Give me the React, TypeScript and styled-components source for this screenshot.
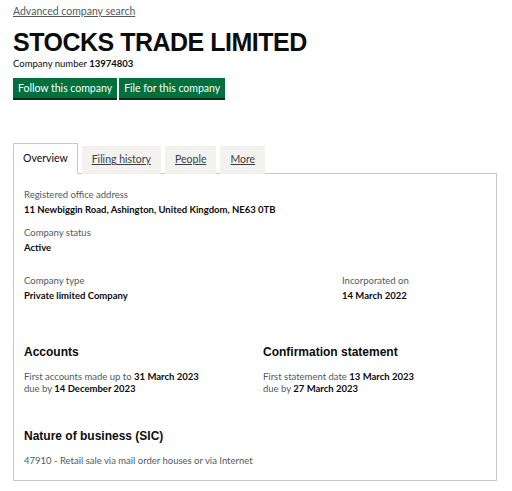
import { createGlobalStyle, styled } from "styled-components";

const GlobalStyle = createGlobalStyle`
  body {
    margin: 0;
    background: #ffffff;
    color: #0b0c0c;
    font-family: Lato, "Noto Sans", "Liberation Sans", Arial, sans-serif;
  }
`;

const Page = styled.div`
  padding: 4px 15px 10px 13px;
  display: flex;
  flex-direction: column;
`;

const BackLink = styled.a`
  font-size: 10.5px;
  color: #505a5f;
  text-decoration: underline;
  line-height: 14px;
  align-self: flex-start;
`;

const Title = styled.h1`
  margin: 12px 0 0;
  font-family: "Liberation Sans", Arial, sans-serif;
  font-size: 25px;
  font-weight: 700;
  line-height: 25px;
  letter-spacing: -0.5px;
`;

const CompanyNumber = styled.p`
  margin: 3px 0 0;
  font-size: 9.5px;
  line-height: 12px;
  color: #0b0c0c;

  strong {
    font-weight: 700;
  }
`;

const ButtonRow = styled.div`
  display: flex;
  gap: 2px;
  margin-top: 8px;
`;

const GreenButton = styled.button`
  background-color: #00703c;
  color: #ffffff;
  border: 0;
  box-shadow: 0 2px 0 #002d18;
  font-family: Lato, "Noto Sans", Arial, sans-serif;
  font-size: 10.5px;
  height: 20px;
  padding: 0 5px;
  cursor: pointer;
`;

const Tabs = styled.div`
  margin-top: 45px;
`;

const TabList = styled.div`
  display: flex;
  align-items: flex-end;
  gap: 4px;
  margin-bottom: -1px;
  position: relative;
`;

const Tab = styled.a<{ $active?: boolean }>`
  font-size: 10.5px;
  line-height: 14px;
  color: ${(p) => (p.$active ? "#0b0c0c" : "#383f43")};
  text-decoration: ${(p) => (p.$active ? "none" : "underline")};
  background: ${(p) => (p.$active ? "#ffffff" : "#f3f2f1")};
  border: 1px solid ${(p) => (p.$active ? "#c8c8c8" : "transparent")};
  border-bottom-color: ${(p) => (p.$active ? "#ffffff" : "transparent")};
  padding: ${(p) => (p.$active ? "7px 9px 8px" : "5px 9px 7px")};
`;

const Panel = styled.div`
  border: 1px solid #c8c8c8;
  padding: 15px 10px 13px 10px;
  width: 462px;
`;

const Field = styled.div`
  display: flex;
  flex-direction: column;
  gap: 4px;
`;

const Label = styled.span`
  font-size: 9.5px;
  line-height: 11px;
  color: #505a5f;
`;

const Value = styled.span`
  font-size: 9.5px;
  line-height: 11px;
  font-weight: 700;
`;

const Stack = styled.div<{ $gap: number }>`
  display: flex;
  flex-direction: column;
  gap: ${(p) => p.$gap}px;
`;

const TwoCol = styled.div<{ $split: string; $top: number }>`
  display: grid;
  grid-template-columns: ${(p) => p.$split};
  margin-top: ${(p) => p.$top}px;
`;

const Section = styled.section<{ $top: number }>`
  margin-top: ${(p) => p.$top}px;
`;

const Heading = styled.h2`
  margin: 0 0 11px;
  font-family: "Liberation Sans", Arial, sans-serif;
  font-size: 12px;
  line-height: 15px;
  font-weight: 700;
`;

const Line = styled.p`
  margin: 0;
  font-size: 9.5px;
  line-height: 12px;
  color: #505a5f;

  strong {
    color: #0b0c0c;
    font-weight: 700;
  }
`;

export default function App() {
  return (
    <>
      <GlobalStyle />
      <Page>
        <BackLink href="#">Advanced company search</BackLink>
        <Title>STOCKS TRADE LIMITED</Title>
        <CompanyNumber>
          Company number <strong>13974803</strong>
        </CompanyNumber>
        <ButtonRow>
          <GreenButton>Follow this company</GreenButton>
          <GreenButton>File for this company</GreenButton>
        </ButtonRow>

        <Tabs>
          <TabList>
            <Tab $active>Overview</Tab>
            <Tab href="#">Filing history</Tab>
            <Tab href="#">People</Tab>
            <Tab href="#">More</Tab>
          </TabList>
          <Panel>
            <Stack $gap={12}>
              <Field>
                <Label>Registered office address</Label>
                <Value>11 Newbiggin Road, Ashington, United Kingdom, NE63 0TB</Value>
              </Field>
              <Field>
                <Label>Company status</Label>
                <Value>Active</Value>
              </Field>
            </Stack>

            <TwoCol $split="318px 1fr" $top={22}>
              <Field>
                <Label>Company type</Label>
                <Value>Private limited Company</Value>
              </Field>
              <Field>
                <Label>Incorporated on</Label>
                <Value>14 March 2022</Value>
              </Field>
            </TwoCol>

            <TwoCol $split="239px 1fr" $top={44}>
              <div>
                <Heading>Accounts</Heading>
                <Line>
                  First accounts made up to <strong>31 March 2023</strong>
                </Line>
                <Line>
                  due by <strong>14 December 2023</strong>
                </Line>
              </div>
              <div>
                <Heading>Confirmation statement</Heading>
                <Line>
                  First statement date <strong>13 March 2023</strong>
                </Line>
                <Line>
                  due by <strong>27 March 2023</strong>
                </Line>
              </div>
            </TwoCol>

            <Section $top={34}>
              <Heading>Nature of business (SIC)</Heading>
              <Line>47910 - Retail sale via mail order houses or via Internet</Line>
            </Section>
          </Panel>
        </Tabs>
      </Page>
    </>
  );
}
